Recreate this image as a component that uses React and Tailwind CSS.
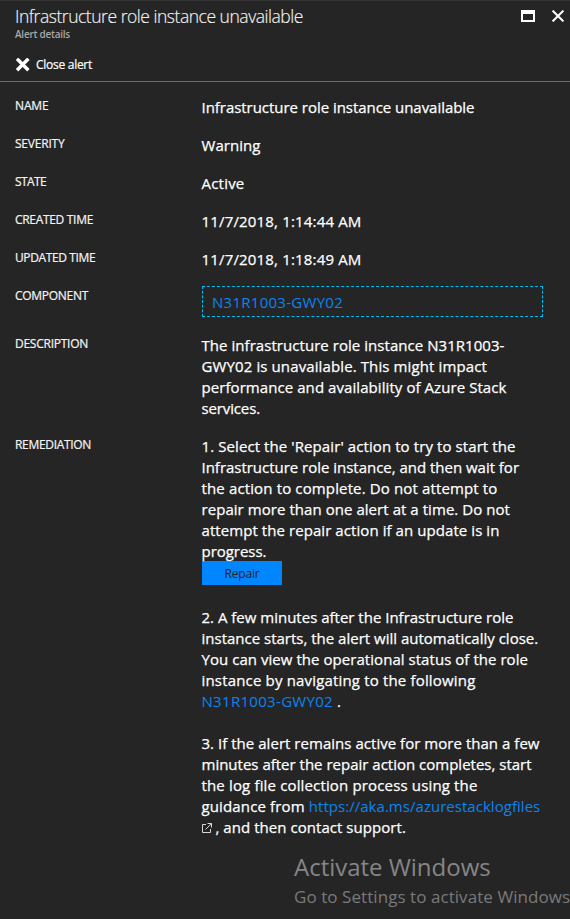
function Label({ className, children }) {
  return <div className={`pt-px text-[12px] leading-[16px] text-[#f4f4f4] [-webkit-text-stroke:0.2px] ${className}`}>{children}</div>;
}

function Row({ label, labelClass, className, children }) {
  return (
    <div className={`grid grid-cols-[186.5px_343px] items-start ${className}`}>
      <Label className={labelClass}>{label}</Label>
      <div className="whitespace-nowrap text-[15px] leading-[21px] [-webkit-text-stroke:0.25px]">{children}</div>
    </div>
  );
}

function Line({ className, children }) {
  return <div className={`h-[21px] ${className}`}>{children}</div>;
}

function ExternalIcon() {
  return (
    <svg className="relative -top-px inline-block h-[10px] w-[10px]" viewBox="0 0 10 10" fill="none" stroke="#d8d8d8" strokeWidth="1">
      <path d="M4 1.5H.5v8h8V6M5.5.5h4v4M9.5.5L3.5 6.5" />
    </svg>
  );
}

export default function App() {
  return (
    <div className="relative flex h-[919px] w-[570px] flex-col overflow-hidden border-t border-[#333333] bg-[#252525] font-['Open_Sans','Noto_Sans',sans-serif] text-white">
      <header className="flex h-[81px] shrink-0 justify-between border-b border-[#6b6b6b] pl-[15px] pr-[6px]">
        <div className="pt-[3px] whitespace-nowrap">
          <h1 className="text-[17.5px] font-light leading-[24px] tracking-[-0.47px] text-[#f4f4f4] [-webkit-text-stroke:0.15px]">
            Infrastructure role instance unavailable
          </h1>
          <p className="text-[10px] font-semibold leading-[12px] tracking-[-0.248px] text-[#a8a8a8]">Alert details</p>
          <button className="mt-[17px] flex h-[16px] items-center gap-[6px] text-[12px] leading-[16px] tracking-[-0.273px] [-webkit-text-stroke:0.2px]">
            <svg className="h-[14px] w-[15px]" viewBox="0 0 15 14" stroke="#fff" strokeWidth="3.4">
              <path d="M2 .7l11.4 11.6M13.4 .7L2 12.3" />
            </svg>
            Close alert
          </button>
        </div>
        <div className="flex gap-[17px] pt-[9px]">
          <svg className="h-[13px] w-[14px]" viewBox="0 0 14 13">
            <path d="M0 0h14v12H0zM2 4v6h10V4z" fill="#fff" fillRule="evenodd" />
          </svg>
          <svg className="h-[12px] w-[12px]" viewBox="0 0 12 12" stroke="#fff" strokeWidth="2">
            <path d="M.6.6l10.8 10.8M11.4.6L.6 11.4" />
          </svg>
        </div>
      </header>

      <main className="pl-[15px] pt-[15px]">
        <Row label="NAME" labelClass="tracking-[-0.148px]" className="h-[38px]">
          <Line className="tracking-[-0.039px]">Infrastructure role instance unavailable</Line>
        </Row>
        <Row label="SEVERITY" labelClass="tracking-[-0.207px]" className="h-[38px]">
          <Line className="tracking-[0.049px]">Warning</Line>
        </Row>
        <Row label="STATE" labelClass="tracking-[-0.613px]" className="h-[38px]">
          <Line className="tracking-[0.214px]">Active</Line>
        </Row>
        <Row label="CREATED TIME" labelClass="tracking-[-0.313px]" className="h-[38px]">
          <Line className="tracking-[0.169px]">11/7/2018, 1:14:44 AM</Line>
        </Row>
        <Row label="UPDATED TIME" labelClass="tracking-[-0.38px]" className="h-[37px]">
          <Line className="tracking-[0.169px]">11/7/2018, 1:18:49 AM</Line>
        </Row>
        <Row label="COMPONENT" labelClass="mt-px tracking-[-0.288px]" className="h-[49px]">
          <div className="ml-[0.5px] flex h-[31px] w-[341px] items-center border border-dashed border-[#00bcf2] pl-[9px] pt-px text-[#0a84f0]">
            <span className="tracking-[0.276px] [-webkit-text-stroke:0px]">N31R1003-GWY02</span>
          </div>
        </Row>
        <Row label="DESCRIPTION" labelClass="tracking-[-0.257px]" className="h-[101px]">
          <Line className="tracking-[0.05px]">The infrastructure role instance N31R1003-</Line>
          <Line className="tracking-[0.115px]">GWY02 is unavailable. This might impact</Line>
          <Line className="tracking-[0.071px]">performance and availability of Azure Stack</Line>
          <Line className="tracking-[-0.132px]">services.</Line>
        </Row>
        <Row label="REMEDIATION" labelClass="tracking-[-0.32px]" className="">
          <Line className="tracking-[0.092px]">1. Select the 'Repair' action to try to start the</Line>
          <Line className="tracking-[-0.02px]">Infrastructure role instance, and then wait for</Line>
          <Line className="tracking-[0.137px]">the action to complete. Do not attempt to</Line>
          <Line className="tracking-[0.054px]">repair more than one alert at a time. Do not</Line>
          <Line className="tracking-[0.072px]">attempt the repair action if an update is in</Line>
          <Line className="tracking-[-0.031px]">progress.</Line>
          <button className="-mt-px ml-[0.5px] flex h-[24px] w-[80px] items-center justify-center bg-[#0086ff] pt-px text-[12px] tracking-[-0.2px] text-[#252525] [-webkit-text-stroke:0px]">
            Repair
          </button>
          <div className="mt-[22px]">
            <Line className="">2. A few minutes after the Infrastructure role</Line>
            <Line className="">instance starts, the alert will automatically close.</Line>
            <Line className="tracking-[0.047px]">You can view the operational status of the role</Line>
            <Line className="tracking-[0.17px]">instance by navigating to the following</Line>
            <Line className="">
              <a className="tracking-[0.31px] text-[#0a84f0] [-webkit-text-stroke:0px]">N31R1003-GWY02</a> .
            </Line>
          </div>
          <div className="mt-[21px]">
            <Line className="tracking-[0.033px]">3. If the alert remains active for more than a few</Line>
            <Line className="">minutes after the repair action completes, start</Line>
            <Line className="tracking-[0.152px]">the log file collection process using the</Line>
            <Line className="tracking-[0.14px]">
              guidance from <a className="tracking-[0.035px] text-[#0a84f0] [-webkit-text-stroke:0px]">https://aka.ms/azurestacklogfiles</a>
            </Line>
            <Line className="tracking-[0.05px]">
              <ExternalIcon /> , and then contact support.
            </Line>
          </div>
        </Row>
      </main>

      <div className="absolute left-[294px] top-[849px] whitespace-nowrap text-[#868686]">
        <div className="text-[24px] leading-[34px] tracking-[-0.02px]">Activate Windows</div>
        <div className="pt-px text-[17px] leading-[24px] tracking-[0.06px] text-[#7a7a7a]">Go to Settings to activate Windows</div>
      </div>
    </div>
  );
}
